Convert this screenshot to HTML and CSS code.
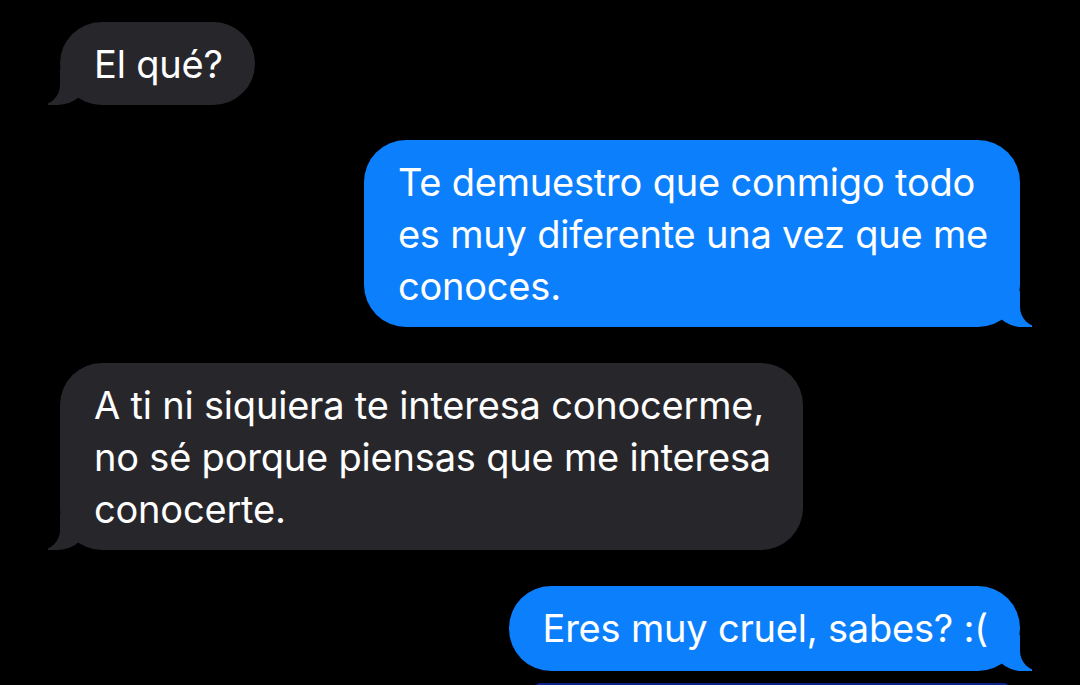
FILE: index.html
```html
<!DOCTYPE html>
<html lang="es">
<head>
  <meta charset="UTF-8">
  <meta name="viewport" content="width=device-width, initial-scale=1.0">
  <title>Mensajes</title>
  <link rel="stylesheet" href="styles.css">
</head>
<body>
<div class="chat">
  <div class="bubble them b1">El qué?</div>

  <div class="bubble me b2">Te demuestro que conmigo todo<br>es muy diferente una vez que me<br>conoces.</div>

  <div class="bubble them b3">A ti ni siquiera te interesa conocerme,<br>no sé porque piensas que me interesa<br>conocerte.</div>

  <div class="bubble me b4">Eres muy cruel, sabes? :(</div>

  <div class="next"></div>
</div>
</body>
</html>
```

FILE: styles.css
```css
body { margin: 0; background: #000; font-family: "Inter", "Liberation Sans", sans-serif; overflow: hidden; }
.chat { display: flex; flex-direction: column; padding: 22px 60px 0 60px; height: 685px; box-sizing: border-box; overflow: hidden; }

.bubble { position: relative; flex-shrink: 0; color: #fff; font-size: 38px; line-height: 52px; letter-spacing: -0.2px; padding: 16px 32px 15px 34px; border-radius: 42px; white-space: nowrap; }
.them { align-self: flex-start; background: #27262b; }
.me { align-self: flex-end; background: #0c7ffd; }

.b2 { margin-top: 35px; }
.b3 { margin-top: 36px; }
.b4 { margin-top: 36px; padding-bottom: 17px; }

/* colitas */
.them::before { content: ""; position: absolute; bottom: 0; left: -12px; width: 40px; height: 36px; background: #27262b; border-bottom-right-radius: 30px 28px; }
.them::after { content: ""; position: absolute; bottom: 0; left: -22px; width: 22px; height: 38px; background: #000; border-bottom-right-radius: 20px; }
.me::before { content: ""; position: absolute; bottom: 0; right: -12px; width: 40px; height: 36px; background: #0c7ffd; border-bottom-left-radius: 30px 28px; }
.me::after { content: ""; position: absolute; bottom: 0; right: -22px; width: 22px; height: 38px; background: #000; border-bottom-left-radius: 20px; }

.next { align-self: flex-end; flex-shrink: 0; width: 476px; height: 20px; margin-top: 12px; margin-right: 10px; background: #0c238a; border-radius: 6px 6px 0 0; }
```
